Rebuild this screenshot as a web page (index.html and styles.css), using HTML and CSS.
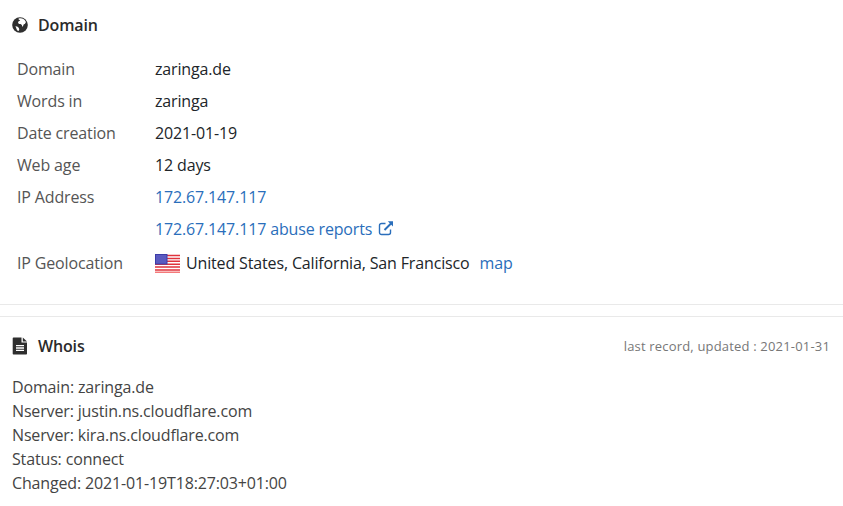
FILE: index.html
```html
<!DOCTYPE html>
<html lang="en">
<head>
  <meta charset="UTF-8">
  <title>zaringa.de</title>
  <meta name="viewport" content="width=device-width, initial-scale=1.0">
  <link rel="stylesheet" href="styles.css">
</head>
<body>
  <section class="box box-domain">
    <h2 class="box-title">
      <svg class="icon" viewBox="0 0 16 16" width="16" height="16">
        <circle cx="8" cy="8" r="7.8" fill="#2f2f2f"/>
        <path d="M6.6 1.6c1.5-.5 3.4-.4 4.8.4.9.6 1.6 1.2 2.2 2.2l.2 1.2-1 1.6-1 .2-.5 1.4-1.1 1.4-.3-2-1.3-.9-1.6-.2-1-1.2.6-1.5 1.6-.6L8 3.2 6.6 2.6z" fill="#fff"/>
        <path d="M3.4 9.2l1.8.4 1.5 1.2.6 1.5-.5 1.4-.9.2-1.2-1.5-.6-1.6z" fill="#fff"/>
      </svg>
      Domain
    </h2>
    <table class="info">
      <tr><th>Domain</th><td>zaringa.de</td></tr>
      <tr><th>Words in</th><td>zaringa</td></tr>
      <tr><th>Date creation</th><td>2021-01-19</td></tr>
      <tr><th>Web age</th><td>12 days</td></tr>
      <tr><th>IP Address</th><td><a href="#">172.67.147.117</a></td></tr>
      <tr>
        <th></th>
        <td>
          <a href="#">172.67.147.117 abuse reports
            <svg class="icon-ext" viewBox="0 0 16 16" width="16" height="16" fill="none" stroke="#2a6ebb">
              <path d="M12.5 9.5v3a2 2 0 0 1-2 2h-7a2 2 0 0 1-2-2v-7a2 2 0 0 1 2-2h4" stroke-width="1.4"/>
              <path d="M6.5 10L13.5 3" stroke-width="2"/>
              <path d="M9.8 1.2h5.2v5.2z" fill="#2a6ebb" stroke="none"/>
            </svg>
          </a>
        </td>
      </tr>
      <tr class="geo">
        <th>IP Geolocation</th>
        <td>
          <span class="geo-cell">
            <svg class="flag" viewBox="0 0 25 19" width="25" height="19">
              <rect width="25" height="19" fill="#fff"/>
              <path d="M0 1.5h25M0 4.4h25M0 7.3h25M0 10.2h25M0 13.1h25M0 16h25" stroke="#e0333c" stroke-width="1.5"/>
              <rect y="17.5" width="25" height="1.5" fill="#f47a7a"/>
              <rect width="12.5" height="10.5" fill="#3c3ca8"/>
              <rect x="1" y="1" width="10.5" height="8.5" fill="#5a5ac0"/>
            </svg>
            <span>United States, California, San Francisco</span>
            <a class="map-link" href="#">map</a>
          </span>
        </td>
      </tr>
    </table>
  </section>

  <section class="box box-whois">
    <div class="box-head">
      <h2 class="box-title">
        <svg class="icon" viewBox="0 0 16 18" width="16" height="18">
          <path d="M1.5 0.5h8v5h5.5v11.2a.8.8 0 0 1-.8.8H1.5a.8.8 0 0 1-.8-.8V1.3a.8.8 0 0 1 .8-.8z" fill="#2f2f2f"/>
          <path d="M10.8 0.6l4.2 3.8h-4.2z" fill="#2f2f2f"/>
          <path d="M4 8.6h8M4 11h8M4 13.4h8" stroke="#fff" stroke-width="1.3"/>
        </svg>
        Whois
      </h2>
      <span class="updated">last record, updated : 2021-01-31</span>
    </div>
    <div class="whois-text">
      Domain: zaringa.de<br>
      Nserver: justin.ns.cloudflare.com<br>
      Nserver: kira.ns.cloudflare.com<br>
      Status: connect<br>
      Changed: 2021-01-19T18:27:03+01:00
    </div>
  </section>
</body>
</html>
```

FILE: styles.css
```css
body {
  font-family: "Open Sans", sans-serif;
  font-size: 16px;
  letter-spacing: -0.15px;
  color: #212529;
  background: #fff;
  margin: 0;
  padding: 0;
}
a {
  color: #2a6ebb;
  text-decoration: none;
}
.box {
  padding: 0 13px 0 12px;
}
.box-domain {
  height: 305px;
  box-sizing: border-box;
  border-bottom: 1px solid #e9e9e9;
  padding-top: 14px;
}
.box-whois {
  margin-top: 11px;
  border-top: 1px solid #e9e9e9;
  padding-top: 18px;
}
.box-title {
  display: flex;
  align-items: center;
  gap: 10px;
  margin: 0;
  font-size: 16px;
  font-weight: 600;
  line-height: 22px;
  color: #2b2b2b;
}
.box-head {
  display: flex;
  justify-content: space-between;
  align-items: center;
}
.updated {
  font-size: 13px;
  letter-spacing: 0.18px;
  color: #777;
}
.info {
  border-collapse: collapse;
  margin: 17px 0 0 5px;
}
.info th {
  width: 138px;
  padding: 0;
  height: 32px;
  text-align: left;
  font-weight: 400;
  color: #555;
}
.info td {
  padding: 0;
  height: 32px;
}
.geo th, .geo td {
  height: 36px;
}
.geo-cell {
  display: flex;
  align-items: center;
}
.flag {
  margin-right: 6px;
}
.map-link {
  margin-left: 10px;
}
.icon-ext {
  vertical-align: -1px;
  margin-left: 2px;
}
.whois-text {
  margin-top: 18px;
  line-height: 24px;
  color: #444;
}
```
